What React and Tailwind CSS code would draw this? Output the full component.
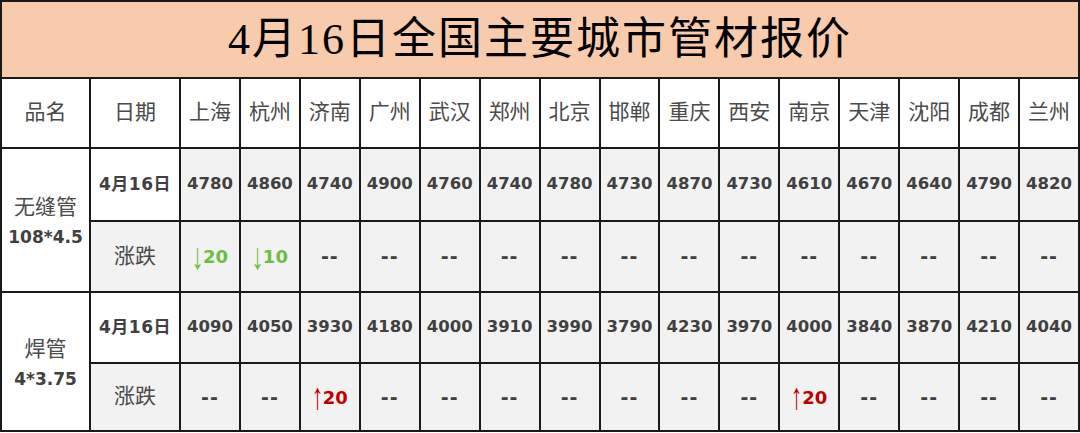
const cities = ['上海', '杭州', '济南', '广州', '武汉', '郑州', '北京', '邯郸', '重庆', '西安', '南京', '天津', '沈阳', '成都', '兰州']

const rows = [
  {
    name: '无缝管',
    spec: '108*4.5',
    prices: [4780, 4860, 4740, 4900, 4760, 4740, 4780, 4730, 4870, 4730, 4610, 4670, 4640, 4790, 4820],
    changes: [['down', 20], ['down', 10], null, null, null, null, null, null, null, null, null, null, null, null, null],
  },
  {
    name: '焊管',
    spec: '4*3.75',
    prices: [4090, 4050, 3930, 4180, 4000, 3910, 3990, 3790, 4230, 3970, 4000, 3840, 3870, 4210, 4040],
    changes: [null, null, ['up', 20], null, null, null, null, null, null, null, ['up', 20], null, null, null, null],
  },
]

const serif = "font-['Liberation_Serif','Noto_Sans_CJK_SC',serif]"
const bold = "font-['DejaVu_Sans','Noto_Sans_CJK_SC',sans-serif] font-bold"

const Change = ({ value }) => {
  if (!value) return <span className="text-[#404040] text-[19px] tracking-[1px]">--</span>
  const [dir, n] = value
  const up = dir === 'up'
  return (
    <span className={`flex items-center ${up ? 'text-[#c00000]' : 'text-[#6cbf3e]'}`}>
      <span className="inline-block scale-y-[1.7] scale-x-[1.1] font-['Liberation_Serif',serif] font-normal text-[22px] leading-none">
        {up ? '↑' : '↓'}
      </span>
      <span className="text-[18px]">{n}</span>
    </span>
  )
}

export default function App() {
  return (
    <div className="w-[1080px] h-[433px] bg-white">
      <div className="w-[1080px] h-[432px] bg-[#1a1a1a] grid grid-cols-[87px_88px_repeat(15,1fr)] grid-rows-[75px_68px_71px_69px_69px_1fr] gap-[2px] p-[2px]">
        <div className={`col-span-17 bg-[#f8cbad] flex items-center justify-center text-[44px] text-black tracking-[2px] ${serif}`}>
          4月16日全国主要城市管材报价
        </div>

        <div className={`bg-white flex items-center justify-center text-[21px] text-[#4a4a4a] ${serif}`}>品名</div>
        <div className={`bg-white flex items-center justify-center text-[21px] text-[#4a4a4a] ${serif}`}>日期</div>
        {cities.map((c) => (
          <div key={c} className={`bg-white flex items-center justify-center text-[21px] text-[#4a4a4a] ${serif}`}>
            {c}
          </div>
        ))}

        {rows.map((r) => (
          <>
            <div key={r.name} className="row-span-2 bg-white flex flex-col items-center justify-center leading-[30px] pt-[4px]">
              <span className={`text-[21px] text-[#4a4a4a] ${serif}`}>{r.name}</span>
              <span className={`text-[17px] text-[#404040] ${bold}`}>{r.spec}</span>
            </div>
            <div className={`bg-white flex items-center justify-center text-[17px] text-[#404040] tracking-[0.5px] ${bold}`}>4月16日</div>
            {r.prices.map((p, i) => (
              <div key={'p' + i} className={`bg-[#f2f2f2] flex items-center justify-center text-[16.5px] text-[#404040] ${bold}`}>
                {p}
              </div>
            ))}
            <div className={`bg-[#f2f2f2] flex items-center justify-center text-[21px] text-[#4a4a4a] ${serif}`}>涨跌</div>
            {r.changes.map((c, i) => (
              <div key={'c' + i} className={`bg-[#f2f2f2] flex items-center justify-center text-[17px] ${bold}`}>
                <Change value={c} />
              </div>
            ))}
          </>
        ))}
      </div>
    </div>
  )
}
